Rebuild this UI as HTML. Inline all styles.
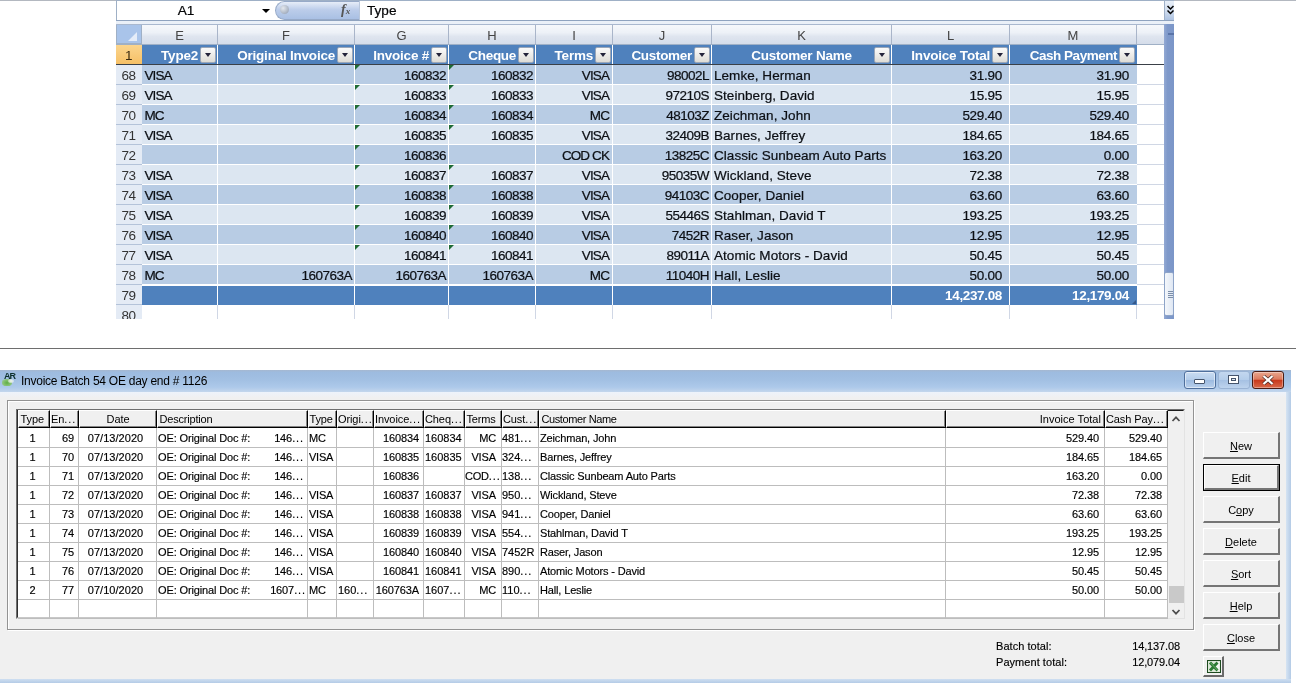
<!DOCTYPE html><html><head><meta charset="utf-8"><title>Invoice Batch</title><style>
*{box-sizing:border-box}
html,body{margin:0;padding:0}
body{width:1296px;height:689px;overflow:hidden;background:#fff;position:relative;will-change:transform;font-family:"Liberation Sans",sans-serif}
div{position:absolute;white-space:pre}
.e{letter-spacing:0.9px}
/* ---------- Excel ---------- */
.x{font-size:13.5px;color:#0c0f14;line-height:19px;height:19px;-webkit-text-stroke:0.22px #0c0f14}
.n{letter-spacing:-0.5px}
.cp{letter-spacing:-0.9px}
.nm{letter-spacing:0.05px}
.d{letter-spacing:-0.28px}
.xr{text-align:right}
.xc{text-align:center}
.hd{color:#fff;font-weight:bold;font-size:13.5px;line-height:19px;height:19px;text-align:right;letter-spacing:-0.25px}
.ch{top:25px;height:19px;line-height:21px;text-align:center;font-size:13px;color:#444;background:linear-gradient(#f6f8fb 0%,#edf1f7 40%,#dfe5ef 60%,#d5ddea 100%);border-right:1px solid #a9b5c9}
.rh{left:116px;width:26px;height:20px;line-height:21px;text-align:center;font-size:13.5px;letter-spacing:-0.4px;padding-right:1px;color:#333;background:#e4ebf5;border-bottom:1px solid #b4c3d9}
.fb{width:16px;height:16px;background:linear-gradient(#fbfbfb,#dedcd6);border:1px solid #9aa6b8;border-radius:2px}
.fb:after{content:"";position:absolute;left:3.5px;top:5px;border-left:3.5px solid transparent;border-right:3.5px solid transparent;border-top:4px solid #23233a}
.gt{width:0;height:0;border-top:5.5px solid #1f6b35;border-right:5.5px solid transparent}
/* ---------- Window ---------- */
.w{font-size:11px;color:#000;line-height:18px;height:18px;-webkit-text-stroke:0.15px #000}
.wt{letter-spacing:-0.22px}
.wr{text-align:right;letter-spacing:-0.12px}
.wc{text-align:center}
.hc{top:410px;height:18px;background:#f0f0f0;border-top:1px solid #fff;border-left:1px solid #fff;border-right:1px solid #000;border-bottom:1px solid #000;line-height:16px;font-size:11px;letter-spacing:-0.1px;padding-left:0;overflow:hidden;box-shadow:inset -1px -1px 0 #858585}
.btn{left:1203px;width:77px;height:27px;background:#f0f0f0;border-top:1px solid #fff;border-left:1px solid #fff;border-right:2px solid #757575;border-bottom:2px solid #757575;text-align:center;font-size:11px;line-height:27px;color:#000}
.btn u{text-decoration:underline}
</style></head><body>
<div style="left:0px;top:0px;width:1296px;height:1px;background:#b3b8c0"></div>
<div style="left:116px;top:0px;width:1058px;height:1px;background:#9fb0c6"></div>
<div style="left:116px;top:0px;width:1px;height:64px;background:#9fb0c6"></div>
<div style="left:117px;top:1px;width:1047px;height:19px;background:#fff"></div>
<div style="left:116px;top:20px;width:1058px;height:1px;background:#8fa3bf"></div>
<div style="left:116px;top:21px;width:1058px;height:3px;background:#eaf0f8"></div>
<div style="left:116px;top:24px;width:1058px;height:1px;background:#a9b8cf"></div>
<div class="x" style="left:150px;top:1px;width:72px;text-align:center;font-size:13.6px;color:#000">A1</div>
<div style="left:262px;top:9px;width:0;height:0;border-left:4px solid transparent;border-right:4px solid transparent;border-top:4px solid #000"></div>
<div style="left:275px;top:1px;width:84px;height:19px;background:linear-gradient(#e6edf8,#bccdea 45%,#a9c0e4);border:1px solid #97aac8;border-right:none;border-radius:10px 0 0 10px"></div>
<div style="left:280px;top:5px;width:9px;height:9px;border-radius:50%;background:radial-gradient(circle at 35% 35%,#e4e8ee,#8c99ad)"></div>
<div style="left:341px;top:1px;width:16px;height:19px;font-family:'Liberation Serif',serif;font-style:italic;font-weight:bold;font-size:14px;line-height:18px;color:#555"><span>f</span><span style="font-size:9px">x</span></div>
<div style="left:359px;top:1px;width:1px;height:19px;background:#b9c7dc"></div>
<div class="x" style="left:367px;top:1px;font-size:13.6px;color:#000">Type</div>
<div style="left:1164px;top:1px;width:10px;height:19px;background:linear-gradient(#e8eff8,#d2deef 50%,#aec3e2);border-left:1px solid #9fb0c8"></div>
<svg style="position:absolute;left:1167px;top:5px" width="7" height="10" viewBox="0 0 7 10"><path d="M0.5 1 L3.5 4 L6.5 1 M0.5 5.5 L3.5 8.5 L6.5 5.5" fill="none" stroke="#000" stroke-width="1.5"/></svg>
<div style="left:117px;top:25px;width:25px;height:19px;background:#a9c4ea;border-right:1px solid #9fb0c6;border-bottom:1px solid #9fb0c6"></div>
<div style="left:128px;top:32px;width:0;height:0;border-left:9px solid transparent;border-bottom:9px solid #e4ecf8"></div>
<div class="ch" style="left:142px;width:76px">E</div>
<div class="ch" style="left:218px;width:137px">F</div>
<div class="ch" style="left:355px;width:94px">G</div>
<div class="ch" style="left:449px;width:87px">H</div>
<div class="ch" style="left:536px;width:77px">I</div>
<div class="ch" style="left:613px;width:99px">J</div>
<div class="ch" style="left:712px;width:180px">K</div>
<div class="ch" style="left:892px;width:118px">L</div>
<div class="ch" style="left:1010px;width:127px">M</div>
<div class="ch" style="left:1137px;width:28px;border-right:none"></div>
<div style="left:117px;top:44px;width:1048px;height:1px;background:#9fb0c6"></div>
<div class="rh" style="top:45px;background:linear-gradient(#fbd58d,#f6c066);border-color:#e0a040;color:#3a2a10">1</div>
<div style="left:142px;top:45px;width:995px;height:19px;background:#4f81bd"></div>
<div class="hd" style="left:142px;top:46px;width:56px;letter-spacing:-0.22px">Type2</div>
<div class="fb" style="left:200px;top:47px"></div>
<div style="left:217px;top:45px;width:1px;height:19px;background:#fff"></div>
<div class="hd" style="left:218px;top:46px;width:117px;letter-spacing:-0.22px">Original Invoice</div>
<div class="fb" style="left:337px;top:47px"></div>
<div style="left:354px;top:45px;width:1px;height:19px;background:#fff"></div>
<div class="hd" style="left:355px;top:46px;width:74px;letter-spacing:-0.22px">Invoice #</div>
<div class="fb" style="left:431px;top:47px"></div>
<div style="left:448px;top:45px;width:1px;height:19px;background:#fff"></div>
<div class="hd" style="left:449px;top:46px;width:67px;letter-spacing:-0.3px">Cheque</div>
<div class="fb" style="left:518px;top:47px"></div>
<div style="left:535px;top:45px;width:1px;height:19px;background:#fff"></div>
<div class="hd" style="left:536px;top:46px;width:57px;letter-spacing:-0.22px">Terms</div>
<div class="fb" style="left:595px;top:47px"></div>
<div style="left:612px;top:45px;width:1px;height:19px;background:#fff"></div>
<div class="hd" style="left:613px;top:46px;width:79px;letter-spacing:-0.3px">Customer</div>
<div class="fb" style="left:694px;top:47px"></div>
<div style="left:711px;top:45px;width:1px;height:19px;background:#fff"></div>
<div class="hd" style="left:712px;top:46px;width:179px;text-align:center;letter-spacing:-0.22px">Customer Name</div>
<div class="fb" style="left:874px;top:47px"></div>
<div style="left:891px;top:45px;width:1px;height:19px;background:#fff"></div>
<div class="hd" style="left:892px;top:46px;width:98px;letter-spacing:-0.22px">Invoice Total</div>
<div class="fb" style="left:992px;top:47px"></div>
<div style="left:1009px;top:45px;width:1px;height:19px;background:#fff"></div>
<div class="hd" style="left:1010px;top:46px;width:107px;letter-spacing:-0.48px">Cash Payment</div>
<div class="fb" style="left:1119px;top:47px"></div>
<div style="left:1137px;top:45px;width:28px;height:19px;background:#fff"></div>
<div style="left:116px;top:64px;width:1048px;height:1px;background:#3a4048"></div>
<div class="rh" style="top:65px">68</div>
<div style="left:142px;top:65px;width:995px;height:19px;background:#b8cce4"></div>
<div class="x cp" style="left:144.5px;top:66px">VISA</div>
<div style="left:217px;top:65px;width:1px;height:20px;background:#fff"></div>
<div style="left:354px;top:65px;width:1px;height:20px;background:#fff"></div>
<div class="x xr n" style="left:355px;top:66px;width:91px">160832</div>
<div style="left:448px;top:65px;width:1px;height:20px;background:#fff"></div>
<div class="x xr n" style="left:449px;top:66px;width:84px">160832</div>
<div style="left:535px;top:65px;width:1px;height:20px;background:#fff"></div>
<div class="x xr cp" style="left:536px;top:66px;width:73px">VISA</div>
<div style="left:612px;top:65px;width:1px;height:20px;background:#fff"></div>
<div class="x xr n" style="left:613px;top:66px;width:96px">98002L</div>
<div style="left:711px;top:65px;width:1px;height:20px;background:#fff"></div>
<div class="x nm" style="left:714px;top:66px">Lemke, Herman</div>
<div style="left:891px;top:65px;width:1px;height:20px;background:#fff"></div>
<div class="x xr d" style="left:892px;top:66px;width:110px">31.90</div>
<div style="left:1009px;top:65px;width:1px;height:20px;background:#fff"></div>
<div class="x xr d" style="left:1010px;top:66px;width:119px">31.90</div>
<div class="gt" style="left:355px;top:65px"></div>
<div class="gt" style="left:449px;top:65px"></div>
<div style="left:1137px;top:65px;width:28px;height:20px;background:#fff;border-bottom:1px solid #d0d7e5"></div>
<div class="rh" style="top:85px">69</div>
<div style="left:142px;top:85px;width:995px;height:19px;background:#dce6f1"></div>
<div class="x cp" style="left:144.5px;top:86px">VISA</div>
<div style="left:217px;top:85px;width:1px;height:20px;background:#fff"></div>
<div style="left:354px;top:85px;width:1px;height:20px;background:#fff"></div>
<div class="x xr n" style="left:355px;top:86px;width:91px">160833</div>
<div style="left:448px;top:85px;width:1px;height:20px;background:#fff"></div>
<div class="x xr n" style="left:449px;top:86px;width:84px">160833</div>
<div style="left:535px;top:85px;width:1px;height:20px;background:#fff"></div>
<div class="x xr cp" style="left:536px;top:86px;width:73px">VISA</div>
<div style="left:612px;top:85px;width:1px;height:20px;background:#fff"></div>
<div class="x xr n" style="left:613px;top:86px;width:96px">97210S</div>
<div style="left:711px;top:85px;width:1px;height:20px;background:#fff"></div>
<div class="x nm" style="left:714px;top:86px">Steinberg, David</div>
<div style="left:891px;top:85px;width:1px;height:20px;background:#fff"></div>
<div class="x xr d" style="left:892px;top:86px;width:110px">15.95</div>
<div style="left:1009px;top:85px;width:1px;height:20px;background:#fff"></div>
<div class="x xr d" style="left:1010px;top:86px;width:119px">15.95</div>
<div class="gt" style="left:355px;top:85px"></div>
<div class="gt" style="left:449px;top:85px"></div>
<div style="left:1137px;top:85px;width:28px;height:20px;background:#fff;border-bottom:1px solid #d0d7e5"></div>
<div class="rh" style="top:105px">70</div>
<div style="left:142px;top:105px;width:995px;height:19px;background:#b8cce4"></div>
<div class="x cp" style="left:144.5px;top:106px">MC</div>
<div style="left:217px;top:105px;width:1px;height:20px;background:#fff"></div>
<div style="left:354px;top:105px;width:1px;height:20px;background:#fff"></div>
<div class="x xr n" style="left:355px;top:106px;width:91px">160834</div>
<div style="left:448px;top:105px;width:1px;height:20px;background:#fff"></div>
<div class="x xr n" style="left:449px;top:106px;width:84px">160834</div>
<div style="left:535px;top:105px;width:1px;height:20px;background:#fff"></div>
<div class="x xr cp" style="left:536px;top:106px;width:73px">MC</div>
<div style="left:612px;top:105px;width:1px;height:20px;background:#fff"></div>
<div class="x xr n" style="left:613px;top:106px;width:96px">48103Z</div>
<div style="left:711px;top:105px;width:1px;height:20px;background:#fff"></div>
<div class="x nm" style="left:714px;top:106px">Zeichman, John</div>
<div style="left:891px;top:105px;width:1px;height:20px;background:#fff"></div>
<div class="x xr d" style="left:892px;top:106px;width:110px">529.40</div>
<div style="left:1009px;top:105px;width:1px;height:20px;background:#fff"></div>
<div class="x xr d" style="left:1010px;top:106px;width:119px">529.40</div>
<div class="gt" style="left:355px;top:105px"></div>
<div class="gt" style="left:449px;top:105px"></div>
<div style="left:1137px;top:105px;width:28px;height:20px;background:#fff;border-bottom:1px solid #d0d7e5"></div>
<div class="rh" style="top:125px">71</div>
<div style="left:142px;top:125px;width:995px;height:19px;background:#dce6f1"></div>
<div class="x cp" style="left:144.5px;top:126px">VISA</div>
<div style="left:217px;top:125px;width:1px;height:20px;background:#fff"></div>
<div style="left:354px;top:125px;width:1px;height:20px;background:#fff"></div>
<div class="x xr n" style="left:355px;top:126px;width:91px">160835</div>
<div style="left:448px;top:125px;width:1px;height:20px;background:#fff"></div>
<div class="x xr n" style="left:449px;top:126px;width:84px">160835</div>
<div style="left:535px;top:125px;width:1px;height:20px;background:#fff"></div>
<div class="x xr cp" style="left:536px;top:126px;width:73px">VISA</div>
<div style="left:612px;top:125px;width:1px;height:20px;background:#fff"></div>
<div class="x xr n" style="left:613px;top:126px;width:96px">32409B</div>
<div style="left:711px;top:125px;width:1px;height:20px;background:#fff"></div>
<div class="x nm" style="left:714px;top:126px">Barnes, Jeffrey</div>
<div style="left:891px;top:125px;width:1px;height:20px;background:#fff"></div>
<div class="x xr d" style="left:892px;top:126px;width:110px">184.65</div>
<div style="left:1009px;top:125px;width:1px;height:20px;background:#fff"></div>
<div class="x xr d" style="left:1010px;top:126px;width:119px">184.65</div>
<div class="gt" style="left:355px;top:125px"></div>
<div class="gt" style="left:449px;top:125px"></div>
<div style="left:1137px;top:125px;width:28px;height:20px;background:#fff;border-bottom:1px solid #d0d7e5"></div>
<div class="rh" style="top:145px">72</div>
<div style="left:142px;top:145px;width:995px;height:19px;background:#b8cce4"></div>
<div style="left:217px;top:145px;width:1px;height:20px;background:#fff"></div>
<div style="left:354px;top:145px;width:1px;height:20px;background:#fff"></div>
<div class="x xr n" style="left:355px;top:146px;width:91px">160836</div>
<div style="left:448px;top:145px;width:1px;height:20px;background:#fff"></div>
<div style="left:535px;top:145px;width:1px;height:20px;background:#fff"></div>
<div class="x xr cp" style="left:536px;top:146px;width:73px">COD CK</div>
<div style="left:612px;top:145px;width:1px;height:20px;background:#fff"></div>
<div class="x xr n" style="left:613px;top:146px;width:96px">13825C</div>
<div style="left:711px;top:145px;width:1px;height:20px;background:#fff"></div>
<div class="x nm" style="left:714px;top:146px">Classic Sunbeam Auto Parts</div>
<div style="left:891px;top:145px;width:1px;height:20px;background:#fff"></div>
<div class="x xr d" style="left:892px;top:146px;width:110px">163.20</div>
<div style="left:1009px;top:145px;width:1px;height:20px;background:#fff"></div>
<div class="x xr d" style="left:1010px;top:146px;width:119px">0.00</div>
<div class="gt" style="left:355px;top:145px"></div>
<div style="left:1137px;top:145px;width:28px;height:20px;background:#fff;border-bottom:1px solid #d0d7e5"></div>
<div class="rh" style="top:165px">73</div>
<div style="left:142px;top:165px;width:995px;height:19px;background:#dce6f1"></div>
<div class="x cp" style="left:144.5px;top:166px">VISA</div>
<div style="left:217px;top:165px;width:1px;height:20px;background:#fff"></div>
<div style="left:354px;top:165px;width:1px;height:20px;background:#fff"></div>
<div class="x xr n" style="left:355px;top:166px;width:91px">160837</div>
<div style="left:448px;top:165px;width:1px;height:20px;background:#fff"></div>
<div class="x xr n" style="left:449px;top:166px;width:84px">160837</div>
<div style="left:535px;top:165px;width:1px;height:20px;background:#fff"></div>
<div class="x xr cp" style="left:536px;top:166px;width:73px">VISA</div>
<div style="left:612px;top:165px;width:1px;height:20px;background:#fff"></div>
<div class="x xr n" style="left:613px;top:166px;width:96px">95035W</div>
<div style="left:711px;top:165px;width:1px;height:20px;background:#fff"></div>
<div class="x nm" style="left:714px;top:166px">Wickland, Steve</div>
<div style="left:891px;top:165px;width:1px;height:20px;background:#fff"></div>
<div class="x xr d" style="left:892px;top:166px;width:110px">72.38</div>
<div style="left:1009px;top:165px;width:1px;height:20px;background:#fff"></div>
<div class="x xr d" style="left:1010px;top:166px;width:119px">72.38</div>
<div class="gt" style="left:355px;top:165px"></div>
<div class="gt" style="left:449px;top:165px"></div>
<div style="left:1137px;top:165px;width:28px;height:20px;background:#fff;border-bottom:1px solid #d0d7e5"></div>
<div class="rh" style="top:185px">74</div>
<div style="left:142px;top:185px;width:995px;height:19px;background:#b8cce4"></div>
<div class="x cp" style="left:144.5px;top:186px">VISA</div>
<div style="left:217px;top:185px;width:1px;height:20px;background:#fff"></div>
<div style="left:354px;top:185px;width:1px;height:20px;background:#fff"></div>
<div class="x xr n" style="left:355px;top:186px;width:91px">160838</div>
<div style="left:448px;top:185px;width:1px;height:20px;background:#fff"></div>
<div class="x xr n" style="left:449px;top:186px;width:84px">160838</div>
<div style="left:535px;top:185px;width:1px;height:20px;background:#fff"></div>
<div class="x xr cp" style="left:536px;top:186px;width:73px">VISA</div>
<div style="left:612px;top:185px;width:1px;height:20px;background:#fff"></div>
<div class="x xr n" style="left:613px;top:186px;width:96px">94103C</div>
<div style="left:711px;top:185px;width:1px;height:20px;background:#fff"></div>
<div class="x nm" style="left:714px;top:186px">Cooper, Daniel</div>
<div style="left:891px;top:185px;width:1px;height:20px;background:#fff"></div>
<div class="x xr d" style="left:892px;top:186px;width:110px">63.60</div>
<div style="left:1009px;top:185px;width:1px;height:20px;background:#fff"></div>
<div class="x xr d" style="left:1010px;top:186px;width:119px">63.60</div>
<div class="gt" style="left:355px;top:185px"></div>
<div class="gt" style="left:449px;top:185px"></div>
<div style="left:1137px;top:185px;width:28px;height:20px;background:#fff;border-bottom:1px solid #d0d7e5"></div>
<div class="rh" style="top:205px">75</div>
<div style="left:142px;top:205px;width:995px;height:19px;background:#dce6f1"></div>
<div class="x cp" style="left:144.5px;top:206px">VISA</div>
<div style="left:217px;top:205px;width:1px;height:20px;background:#fff"></div>
<div style="left:354px;top:205px;width:1px;height:20px;background:#fff"></div>
<div class="x xr n" style="left:355px;top:206px;width:91px">160839</div>
<div style="left:448px;top:205px;width:1px;height:20px;background:#fff"></div>
<div class="x xr n" style="left:449px;top:206px;width:84px">160839</div>
<div style="left:535px;top:205px;width:1px;height:20px;background:#fff"></div>
<div class="x xr cp" style="left:536px;top:206px;width:73px">VISA</div>
<div style="left:612px;top:205px;width:1px;height:20px;background:#fff"></div>
<div class="x xr n" style="left:613px;top:206px;width:96px">55446S</div>
<div style="left:711px;top:205px;width:1px;height:20px;background:#fff"></div>
<div class="x nm" style="left:714px;top:206px">Stahlman, David T</div>
<div style="left:891px;top:205px;width:1px;height:20px;background:#fff"></div>
<div class="x xr d" style="left:892px;top:206px;width:110px">193.25</div>
<div style="left:1009px;top:205px;width:1px;height:20px;background:#fff"></div>
<div class="x xr d" style="left:1010px;top:206px;width:119px">193.25</div>
<div class="gt" style="left:355px;top:205px"></div>
<div class="gt" style="left:449px;top:205px"></div>
<div style="left:1137px;top:205px;width:28px;height:20px;background:#fff;border-bottom:1px solid #d0d7e5"></div>
<div class="rh" style="top:225px">76</div>
<div style="left:142px;top:225px;width:995px;height:19px;background:#b8cce4"></div>
<div class="x cp" style="left:144.5px;top:226px">VISA</div>
<div style="left:217px;top:225px;width:1px;height:20px;background:#fff"></div>
<div style="left:354px;top:225px;width:1px;height:20px;background:#fff"></div>
<div class="x xr n" style="left:355px;top:226px;width:91px">160840</div>
<div style="left:448px;top:225px;width:1px;height:20px;background:#fff"></div>
<div class="x xr n" style="left:449px;top:226px;width:84px">160840</div>
<div style="left:535px;top:225px;width:1px;height:20px;background:#fff"></div>
<div class="x xr cp" style="left:536px;top:226px;width:73px">VISA</div>
<div style="left:612px;top:225px;width:1px;height:20px;background:#fff"></div>
<div class="x xr n" style="left:613px;top:226px;width:96px">7452R</div>
<div style="left:711px;top:225px;width:1px;height:20px;background:#fff"></div>
<div class="x nm" style="left:714px;top:226px">Raser, Jason</div>
<div style="left:891px;top:225px;width:1px;height:20px;background:#fff"></div>
<div class="x xr d" style="left:892px;top:226px;width:110px">12.95</div>
<div style="left:1009px;top:225px;width:1px;height:20px;background:#fff"></div>
<div class="x xr d" style="left:1010px;top:226px;width:119px">12.95</div>
<div class="gt" style="left:355px;top:225px"></div>
<div class="gt" style="left:449px;top:225px"></div>
<div style="left:1137px;top:225px;width:28px;height:20px;background:#fff;border-bottom:1px solid #d0d7e5"></div>
<div class="rh" style="top:245px">77</div>
<div style="left:142px;top:245px;width:995px;height:19px;background:#dce6f1"></div>
<div class="x cp" style="left:144.5px;top:246px">VISA</div>
<div style="left:217px;top:245px;width:1px;height:20px;background:#fff"></div>
<div style="left:354px;top:245px;width:1px;height:20px;background:#fff"></div>
<div class="x xr n" style="left:355px;top:246px;width:91px">160841</div>
<div style="left:448px;top:245px;width:1px;height:20px;background:#fff"></div>
<div class="x xr n" style="left:449px;top:246px;width:84px">160841</div>
<div style="left:535px;top:245px;width:1px;height:20px;background:#fff"></div>
<div class="x xr cp" style="left:536px;top:246px;width:73px">VISA</div>
<div style="left:612px;top:245px;width:1px;height:20px;background:#fff"></div>
<div class="x xr n" style="left:613px;top:246px;width:96px">89011A</div>
<div style="left:711px;top:245px;width:1px;height:20px;background:#fff"></div>
<div class="x nm" style="left:714px;top:246px">Atomic Motors - David</div>
<div style="left:891px;top:245px;width:1px;height:20px;background:#fff"></div>
<div class="x xr d" style="left:892px;top:246px;width:110px">50.45</div>
<div style="left:1009px;top:245px;width:1px;height:20px;background:#fff"></div>
<div class="x xr d" style="left:1010px;top:246px;width:119px">50.45</div>
<div class="gt" style="left:355px;top:245px"></div>
<div class="gt" style="left:449px;top:245px"></div>
<div style="left:1137px;top:245px;width:28px;height:20px;background:#fff;border-bottom:1px solid #d0d7e5"></div>
<div class="rh" style="top:265px">78</div>
<div style="left:142px;top:265px;width:995px;height:18.5px;background:#b8cce4"></div>
<div class="x cp" style="left:144.5px;top:266px">MC</div>
<div style="left:217px;top:265px;width:1px;height:20px;background:#fff"></div>
<div class="x xr n" style="left:218px;top:266px;width:134px">160763A</div>
<div style="left:354px;top:265px;width:1px;height:20px;background:#fff"></div>
<div class="x xr n" style="left:355px;top:266px;width:91px">160763A</div>
<div style="left:448px;top:265px;width:1px;height:20px;background:#fff"></div>
<div class="x xr n" style="left:449px;top:266px;width:84px">160763A</div>
<div style="left:535px;top:265px;width:1px;height:20px;background:#fff"></div>
<div class="x xr cp" style="left:536px;top:266px;width:73px">MC</div>
<div style="left:612px;top:265px;width:1px;height:20px;background:#fff"></div>
<div class="x xr n" style="left:613px;top:266px;width:96px">11040H</div>
<div style="left:711px;top:265px;width:1px;height:20px;background:#fff"></div>
<div class="x nm" style="left:714px;top:266px">Hall, Leslie</div>
<div style="left:891px;top:265px;width:1px;height:20px;background:#fff"></div>
<div class="x xr d" style="left:892px;top:266px;width:110px">50.00</div>
<div style="left:1009px;top:265px;width:1px;height:20px;background:#fff"></div>
<div class="x xr d" style="left:1010px;top:266px;width:119px">50.00</div>
<div style="left:1137px;top:265px;width:28px;height:20px;background:#fff;border-bottom:1px solid #d0d7e5"></div>
<div class="rh" style="top:285px">79</div>
<div style="left:142px;top:286px;width:995px;height:19px;background:#4f81bd"></div>
<div style="left:217px;top:285px;width:1px;height:20px;background:#fff"></div>
<div style="left:354px;top:285px;width:1px;height:20px;background:#fff"></div>
<div style="left:448px;top:285px;width:1px;height:20px;background:#fff"></div>
<div style="left:535px;top:285px;width:1px;height:20px;background:#fff"></div>
<div style="left:612px;top:285px;width:1px;height:20px;background:#fff"></div>
<div style="left:711px;top:285px;width:1px;height:20px;background:#fff"></div>
<div style="left:891px;top:285px;width:1px;height:20px;background:#fff"></div>
<div style="left:1009px;top:285px;width:1px;height:20px;background:#fff"></div>
<div class="hd" style="left:892px;top:286px;width:110px;letter-spacing:-0.35px">14,237.08</div>
<div class="hd" style="left:1010px;top:286px;width:119px;letter-spacing:-0.35px">12,179.04</div>
<div style="left:1137px;top:285px;width:28px;height:20px;background:#fff;border-bottom:1px solid #d0d7e5"></div>
<div style="left:1132px;top:300px;width:0px;height:0px;width:0;height:0;border-left:4px solid transparent;border-bottom:4px solid #35588a"></div>
<div class="rh" style="top:305px;height:14px;border-bottom:none;overflow:hidden">80</div>
<div style="left:217px;top:305px;width:1px;height:14px;background:#d0d7e5"></div>
<div style="left:354px;top:305px;width:1px;height:14px;background:#d0d7e5"></div>
<div style="left:448px;top:305px;width:1px;height:14px;background:#d0d7e5"></div>
<div style="left:535px;top:305px;width:1px;height:14px;background:#d0d7e5"></div>
<div style="left:612px;top:305px;width:1px;height:14px;background:#d0d7e5"></div>
<div style="left:711px;top:305px;width:1px;height:14px;background:#d0d7e5"></div>
<div style="left:891px;top:305px;width:1px;height:14px;background:#d0d7e5"></div>
<div style="left:1009px;top:305px;width:1px;height:14px;background:#d0d7e5"></div>
<div style="left:1136px;top:305px;width:1px;height:14px;background:#d0d7e5"></div>
<div style="left:1164px;top:24px;width:10px;height:295px;background:linear-gradient(90deg,#93a9d3,#7f99ca 35%,#7b96c8)"></div>
<div style="left:1168px;top:33px;width:6px;height:2px;background:#5a74a8"></div>
<div style="left:1164px;top:272px;width:10px;height:44px;background:linear-gradient(90deg,#f4f7fb,#dfe7f3);border:1px solid #8ea4c8;border-radius:2px"></div>
<div style="left:1168px;top:291px;width:5px;height:1px;background:#7c8ea9"></div>
<div style="left:1168px;top:293px;width:5px;height:1px;background:#7c8ea9"></div>
<div style="left:1168px;top:295px;width:5px;height:1px;background:#7c8ea9"></div>
<div style="left:1168px;top:297px;width:5px;height:1px;background:#7c8ea9"></div>
<div style="left:0px;top:348px;width:1296px;height:1px;background:#6e6e6e"></div>
<div style="left:0px;top:370px;width:1291px;height:313px;background:#b9d1ea"></div>
<div style="left:0px;top:370px;width:1291px;height:22px;background:linear-gradient(#a6b8d0 0,#9dbbdf 10%,#a2c0e3 45%,#adc9ea 78%,#c3d6ec 100%)"></div>
<div style="left:0px;top:392px;width:1286px;height:287px;background:linear-gradient(#edf3fb 0,#f0f0f0 6px)"></div>
<div style="left:1286px;top:392px;width:5px;height:291px;background:linear-gradient(90deg,#d6e4f3,#b4cbe6)"></div>
<div style="left:0px;top:679px;width:1291px;height:4px;background:linear-gradient(#cfdff1,#b4cbe6)"></div>
<div style="left:4px;top:372px;font-size:9px;font-weight:bold;line-height:9px;color:#0c2f2a;letter-spacing:-0.9px">AR</div>
<div style="left:2px;top:379px;width:10px;height:7px;background:radial-gradient(ellipse at 50% 55%,#5fae45,#8cc47a 60%,rgba(140,196,122,0));border-radius:40%"></div>
<div style="left:8px;top:379px;width:6px;height:4px;background:radial-gradient(ellipse,#f4f7f2,rgba(244,247,242,0.2));border-radius:50%"></div>
<div style="left:21px;top:373px;font-size:12px;line-height:16px;color:#000;letter-spacing:-0.25px">Invoice Batch 54 OE day end # 1126</div>
<div style="left:1184px;top:371px;width:32px;height:18px;background:linear-gradient(#c9dcf2 0%,#b4cdea 48%,#9dbbe0 52%,#b9d0ec 100%);border:1px solid #4f6f9c;border-radius:3px;box-shadow:inset 0 0 0 1px rgba(255,255,255,.5)"></div>
<div style="left:1194px;top:379px;width:11px;height:5px;background:#fff;border:1px solid #45546b;border-radius:1px"></div>
<div style="left:1218px;top:371px;width:32px;height:18px;background:linear-gradient(#c3d7ef 0%,#b4cdea 48%,#a6c1e3 52%,#bdd3ed 100%);border:1px solid #9ab3d4;border-radius:3px"></div>
<div style="left:1228px;top:375px;width:11px;height:9px;background:#fff;border:1px solid #45546b"></div>
<div style="left:1231px;top:378px;width:5px;height:3px;background:#dfe6f0;border:1px solid #45546b"></div>
<div style="left:1252px;top:371px;width:32px;height:18px;background:linear-gradient(#e9a78f 0%,#dd7a5d 45%,#c8391c 52%,#d9694a 100%);border:1px solid #4a1c14;border-radius:3px;box-shadow:inset 0 0 0 1px rgba(255,255,255,.35)"></div>
<svg style="position:absolute;left:1262px;top:375px" width="12" height="10" viewBox="0 0 12 10"><path d="M1.5 1 L10.5 9 M10.5 1 L1.5 9" stroke="#4a2a25" stroke-width="3.6" fill="none"/><path d="M1.5 1 L10.5 9 M10.5 1 L1.5 9" stroke="#fff" stroke-width="2.3" fill="none"/></svg>
<div style="left:7px;top:400px;width:1187px;height:230px;border:1px solid #939393;box-shadow:inset 1px 1px 0 #fff, 1px 1px 0 #fff"></div>
<div style="left:16px;top:409px;width:1169px;height:210px;background:#fff;border-top:1px solid #6e6e6e;border-left:1px solid #6e6e6e;border-right:1px solid #e3e3e3;border-bottom:1px solid #e3e3e3"></div>
<div style="left:17px;top:410px;width:1167px;height:208px;border-top:1px solid #1c1c1c;border-left:1px solid #2e2e2e;border-right:1px solid #c8c8c8;border-bottom:1px solid #c8c8c8"></div>
<div class="hc" style="left:18px;width:32px;padding-left:1.5px;">Type</div>
<div class="hc" style="left:50px;width:29px;">En<span class="e">...</span></div>
<div class="hc" style="left:79px;width:78px;text-align:center;padding-left:0;">Date</div>
<div class="hc" style="left:157px;width:151px;letter-spacing:-0.2px;padding-left:1.5px;">Description</div>
<div class="hc" style="left:308px;width:29px;padding-left:0.5px;letter-spacing:-0.2px;">Type</div>
<div class="hc" style="left:337px;width:37px;">Origi<span class="e">...</span></div>
<div class="hc" style="left:374px;width:50px;">Invoice<span class="e">...</span></div>
<div class="hc" style="left:424px;width:41px;">Cheq<span class="e">...</span></div>
<div class="hc" style="left:465px;width:37px;padding-left:0.5px;letter-spacing:-0.2px;">Terms</div>
<div class="hc" style="left:502px;width:37px;">Cust<span class="e">...</span></div>
<div class="hc" style="left:539px;width:407px;letter-spacing:-0.4px;padding-left:1.5px;">Customer Name</div>
<div class="hc" style="left:946px;width:159px;text-align:right;padding-right:3px;letter-spacing:0.03px;">Invoice Total</div>
<div class="hc" style="left:1105px;width:63px;">Cash Pay<span class="e">...</span></div>
<div style="left:1168px;top:411px;width:16px;height:207px;background:#f0f0f0"></div>
<svg style="position:absolute;left:1171px;top:415px" width="10" height="8" viewBox="0 0 10 8"><path d="M1.5 6 L5 2.3 L8.5 6" fill="none" stroke="#4d4d4d" stroke-width="1.7"/></svg>
<svg style="position:absolute;left:1171px;top:608px" width="10" height="8" viewBox="0 0 10 8"><path d="M1.5 2 L5 5.7 L8.5 2" fill="none" stroke="#4d4d4d" stroke-width="1.7"/></svg>
<div style="left:1169px;top:586px;width:15px;height:17px;background:#c9c9c9"></div>
<div style="left:18px;top:447px;width:1150px;height:1px;background:#bdbdbd"></div>
<div class="w wc" style="left:17px;top:429px;width:31px">1</div>
<div class="w wr" style="left:50px;top:429px;width:24px">69</div>
<div class="w wc" style="left:77px;top:429px;width:77px;letter-spacing:0.05px">07/13/2020</div>
<div class="w" style="left:158px;top:429px;letter-spacing:-0.13px">OE: Original Doc #:</div>
<div class="w wr" style="left:257px;top:429px;width:47px">146<span class="e">...</span></div>
<div class="w wt" style="left:309px;top:429px">MC</div>
<div class="w wr" style="left:374px;top:429px;width:45px">160834</div>
<div class="w" style="left:425px;top:429px">160834</div>
<div class="w wr wt" style="left:465px;top:429px;width:31px">MC</div>
<div class="w" style="left:502px;top:429px">481<span class="e">...</span></div>
<div class="w" style="left:540px;top:429px;letter-spacing:-0.15px">Zeichman, John</div>
<div class="w wr" style="left:946px;top:429px;width:153px">529.40</div>
<div class="w wr" style="left:1104px;top:429px;width:58px">529.40</div>
<div style="left:18px;top:466px;width:1150px;height:1px;background:#bdbdbd"></div>
<div class="w wc" style="left:17px;top:448px;width:31px">1</div>
<div class="w wr" style="left:50px;top:448px;width:24px">70</div>
<div class="w wc" style="left:77px;top:448px;width:77px;letter-spacing:0.05px">07/13/2020</div>
<div class="w" style="left:158px;top:448px;letter-spacing:-0.13px">OE: Original Doc #:</div>
<div class="w wr" style="left:257px;top:448px;width:47px">146<span class="e">...</span></div>
<div class="w wt" style="left:309px;top:448px">VISA</div>
<div class="w wr" style="left:374px;top:448px;width:45px">160835</div>
<div class="w" style="left:425px;top:448px">160835</div>
<div class="w wr wt" style="left:465px;top:448px;width:31px">VISA</div>
<div class="w" style="left:502px;top:448px">324<span class="e">...</span></div>
<div class="w" style="left:540px;top:448px;letter-spacing:-0.15px">Barnes, Jeffrey</div>
<div class="w wr" style="left:946px;top:448px;width:153px">184.65</div>
<div class="w wr" style="left:1104px;top:448px;width:58px">184.65</div>
<div style="left:18px;top:485px;width:1150px;height:1px;background:#bdbdbd"></div>
<div class="w wc" style="left:17px;top:467px;width:31px">1</div>
<div class="w wr" style="left:50px;top:467px;width:24px">71</div>
<div class="w wc" style="left:77px;top:467px;width:77px;letter-spacing:0.05px">07/13/2020</div>
<div class="w" style="left:158px;top:467px;letter-spacing:-0.13px">OE: Original Doc #:</div>
<div class="w wr" style="left:257px;top:467px;width:47px">146<span class="e">...</span></div>
<div class="w wr" style="left:374px;top:467px;width:45px">160836</div>
<div class="w wt" style="left:465px;top:467px">COD<span class="e">...</span></div>
<div class="w" style="left:502px;top:467px">138<span class="e">...</span></div>
<div class="w" style="left:540px;top:467px;letter-spacing:-0.15px">Classic Sunbeam Auto Parts</div>
<div class="w wr" style="left:946px;top:467px;width:153px">163.20</div>
<div class="w wr" style="left:1104px;top:467px;width:58px">0.00</div>
<div style="left:18px;top:504px;width:1150px;height:1px;background:#bdbdbd"></div>
<div class="w wc" style="left:17px;top:486px;width:31px">1</div>
<div class="w wr" style="left:50px;top:486px;width:24px">72</div>
<div class="w wc" style="left:77px;top:486px;width:77px;letter-spacing:0.05px">07/13/2020</div>
<div class="w" style="left:158px;top:486px;letter-spacing:-0.13px">OE: Original Doc #:</div>
<div class="w wr" style="left:257px;top:486px;width:47px">146<span class="e">...</span></div>
<div class="w wt" style="left:309px;top:486px">VISA</div>
<div class="w wr" style="left:374px;top:486px;width:45px">160837</div>
<div class="w" style="left:425px;top:486px">160837</div>
<div class="w wr wt" style="left:465px;top:486px;width:31px">VISA</div>
<div class="w" style="left:502px;top:486px">950<span class="e">...</span></div>
<div class="w" style="left:540px;top:486px;letter-spacing:-0.15px">Wickland, Steve</div>
<div class="w wr" style="left:946px;top:486px;width:153px">72.38</div>
<div class="w wr" style="left:1104px;top:486px;width:58px">72.38</div>
<div style="left:18px;top:523px;width:1150px;height:1px;background:#bdbdbd"></div>
<div class="w wc" style="left:17px;top:505px;width:31px">1</div>
<div class="w wr" style="left:50px;top:505px;width:24px">73</div>
<div class="w wc" style="left:77px;top:505px;width:77px;letter-spacing:0.05px">07/13/2020</div>
<div class="w" style="left:158px;top:505px;letter-spacing:-0.13px">OE: Original Doc #:</div>
<div class="w wr" style="left:257px;top:505px;width:47px">146<span class="e">...</span></div>
<div class="w wt" style="left:309px;top:505px">VISA</div>
<div class="w wr" style="left:374px;top:505px;width:45px">160838</div>
<div class="w" style="left:425px;top:505px">160838</div>
<div class="w wr wt" style="left:465px;top:505px;width:31px">VISA</div>
<div class="w" style="left:502px;top:505px">941<span class="e">...</span></div>
<div class="w" style="left:540px;top:505px;letter-spacing:-0.15px">Cooper, Daniel</div>
<div class="w wr" style="left:946px;top:505px;width:153px">63.60</div>
<div class="w wr" style="left:1104px;top:505px;width:58px">63.60</div>
<div style="left:18px;top:542px;width:1150px;height:1px;background:#bdbdbd"></div>
<div class="w wc" style="left:17px;top:524px;width:31px">1</div>
<div class="w wr" style="left:50px;top:524px;width:24px">74</div>
<div class="w wc" style="left:77px;top:524px;width:77px;letter-spacing:0.05px">07/13/2020</div>
<div class="w" style="left:158px;top:524px;letter-spacing:-0.13px">OE: Original Doc #:</div>
<div class="w wr" style="left:257px;top:524px;width:47px">146<span class="e">...</span></div>
<div class="w wt" style="left:309px;top:524px">VISA</div>
<div class="w wr" style="left:374px;top:524px;width:45px">160839</div>
<div class="w" style="left:425px;top:524px">160839</div>
<div class="w wr wt" style="left:465px;top:524px;width:31px">VISA</div>
<div class="w" style="left:502px;top:524px">554<span class="e">...</span></div>
<div class="w" style="left:540px;top:524px;letter-spacing:-0.15px">Stahlman, David T</div>
<div class="w wr" style="left:946px;top:524px;width:153px">193.25</div>
<div class="w wr" style="left:1104px;top:524px;width:58px">193.25</div>
<div style="left:18px;top:561px;width:1150px;height:1px;background:#bdbdbd"></div>
<div class="w wc" style="left:17px;top:543px;width:31px">1</div>
<div class="w wr" style="left:50px;top:543px;width:24px">75</div>
<div class="w wc" style="left:77px;top:543px;width:77px;letter-spacing:0.05px">07/13/2020</div>
<div class="w" style="left:158px;top:543px;letter-spacing:-0.13px">OE: Original Doc #:</div>
<div class="w wr" style="left:257px;top:543px;width:47px">146<span class="e">...</span></div>
<div class="w wt" style="left:309px;top:543px">VISA</div>
<div class="w wr" style="left:374px;top:543px;width:45px">160840</div>
<div class="w" style="left:425px;top:543px">160840</div>
<div class="w wr wt" style="left:465px;top:543px;width:31px">VISA</div>
<div class="w" style="left:502px;top:543px">7452R</div>
<div class="w" style="left:540px;top:543px;letter-spacing:-0.15px">Raser, Jason</div>
<div class="w wr" style="left:946px;top:543px;width:153px">12.95</div>
<div class="w wr" style="left:1104px;top:543px;width:58px">12.95</div>
<div style="left:18px;top:580px;width:1150px;height:1px;background:#bdbdbd"></div>
<div class="w wc" style="left:17px;top:562px;width:31px">1</div>
<div class="w wr" style="left:50px;top:562px;width:24px">76</div>
<div class="w wc" style="left:77px;top:562px;width:77px;letter-spacing:0.05px">07/13/2020</div>
<div class="w" style="left:158px;top:562px;letter-spacing:-0.13px">OE: Original Doc #:</div>
<div class="w wr" style="left:257px;top:562px;width:47px">146<span class="e">...</span></div>
<div class="w wt" style="left:309px;top:562px">VISA</div>
<div class="w wr" style="left:374px;top:562px;width:45px">160841</div>
<div class="w" style="left:425px;top:562px">160841</div>
<div class="w wr wt" style="left:465px;top:562px;width:31px">VISA</div>
<div class="w" style="left:502px;top:562px">890<span class="e">...</span></div>
<div class="w" style="left:540px;top:562px;letter-spacing:-0.15px">Atomic Motors - David</div>
<div class="w wr" style="left:946px;top:562px;width:153px">50.45</div>
<div class="w wr" style="left:1104px;top:562px;width:58px">50.45</div>
<div style="left:18px;top:599px;width:1150px;height:1px;background:#bdbdbd"></div>
<div class="w wc" style="left:17px;top:581px;width:31px">2</div>
<div class="w wr" style="left:50px;top:581px;width:24px">77</div>
<div class="w wc" style="left:77px;top:581px;width:77px;letter-spacing:0.05px">07/10/2020</div>
<div class="w" style="left:158px;top:581px;letter-spacing:-0.13px">OE: Original Doc #:</div>
<div class="w wr" style="left:257px;top:581px;width:49px">1607<span class="e">...</span></div>
<div class="w wt" style="left:309px;top:581px">MC</div>
<div class="w" style="left:338px;top:581px">160<span class="e">...</span></div>
<div class="w wr" style="left:374px;top:581px;width:45px">160763A</div>
<div class="w" style="left:425px;top:581px">1607<span class="e">...</span></div>
<div class="w wr wt" style="left:465px;top:581px;width:31px">MC</div>
<div class="w" style="left:502px;top:581px">110<span class="e">...</span></div>
<div class="w" style="left:540px;top:581px;letter-spacing:-0.15px">Hall, Leslie</div>
<div class="w wr" style="left:946px;top:581px;width:153px">50.00</div>
<div class="w wr" style="left:1104px;top:581px;width:58px">50.00</div>
<div style="left:18px;top:618px;width:1150px;height:1px;background:#bdbdbd"></div>
<div style="left:49px;top:428px;width:1px;height:190px;background:#bdbdbd"></div>
<div style="left:78px;top:428px;width:1px;height:190px;background:#bdbdbd"></div>
<div style="left:156px;top:428px;width:1px;height:190px;background:#bdbdbd"></div>
<div style="left:307px;top:428px;width:1px;height:190px;background:#bdbdbd"></div>
<div style="left:336px;top:428px;width:1px;height:190px;background:#bdbdbd"></div>
<div style="left:373px;top:428px;width:1px;height:190px;background:#bdbdbd"></div>
<div style="left:423px;top:428px;width:1px;height:190px;background:#bdbdbd"></div>
<div style="left:464px;top:428px;width:1px;height:190px;background:#bdbdbd"></div>
<div style="left:501px;top:428px;width:1px;height:190px;background:#bdbdbd"></div>
<div style="left:538px;top:428px;width:1px;height:190px;background:#bdbdbd"></div>
<div style="left:945px;top:428px;width:1px;height:190px;background:#bdbdbd"></div>
<div style="left:1104px;top:428px;width:1px;height:190px;background:#bdbdbd"></div>
<div style="left:1167px;top:428px;width:1px;height:190px;background:#bdbdbd"></div>
<div class="btn" style="top:432px"><u>N</u>ew</div>
<div style="left:1203px;top:464px;width:77px;height:27px;background:#000"></div>
<div class="btn" style="left:1204px;top:465px;width:75px;height:25px;line-height:25px"><u>E</u>dit</div>
<div class="btn" style="top:496px">C<u>o</u>py</div>
<div class="btn" style="top:528px"><u>D</u>elete</div>
<div class="btn" style="top:560px"><u>S</u>ort</div>
<div class="btn" style="top:592px"><u>H</u>elp</div>
<div class="btn" style="top:624px"><u>C</u>lose</div>
<div class="w" style="left:996px;top:637px;letter-spacing:0.05px">Batch total:</div>
<div class="w" style="left:996px;top:653px;letter-spacing:0.05px">Payment total:</div>
<div class="w wr" style="left:1100px;top:637px;width:80px">14,137.08</div>
<div class="w wr" style="left:1100px;top:653px;width:80px">12,079.04</div>
<div style="left:1203px;top:656px;width:21px;height:21px;background:#f0f0f0;border-top:1px solid #fff;border-left:1px solid #fff;border-right:2px solid #6a6a6a;border-bottom:2px solid #6a6a6a"></div>
<svg style="position:absolute;left:1207px;top:660px" width="14" height="13" viewBox="0 0 14 13"><rect x="0.5" y="0.5" width="13" height="12" fill="#dce8d8" stroke="#1d4a1f"/><rect x="8" y="2" width="4.5" height="9" fill="#f2f7f0"/><path d="M3 2.5 L10.5 10.5 M10.5 2.5 L3 10.5" stroke="#2b7a33" stroke-width="2.8"/><path d="M3.5 2.7 L10.3 10" stroke="#7cc077" stroke-width="0.8"/></svg>
</body></html>
